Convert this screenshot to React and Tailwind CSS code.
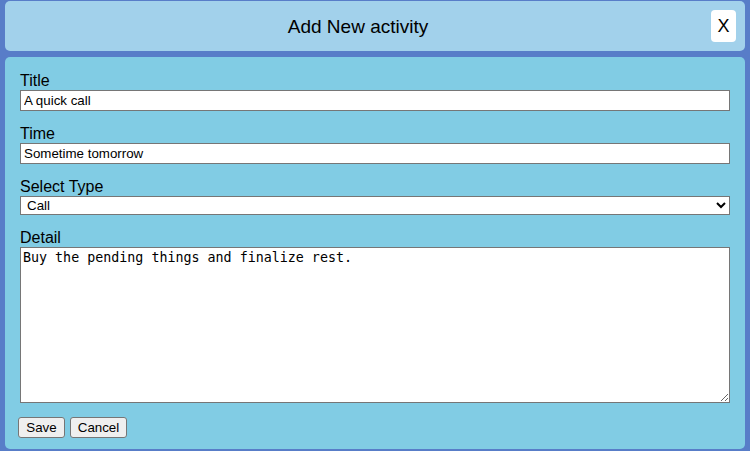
import { useState } from "react";

const App = () => {
  const [title, setTitle] = useState("A quick call");
  const [time, setTime] = useState("Sometime tomorrow");
  const [type, setType] = useState("Call");
  const [detail, setDetail] = useState("Buy the pending things and finalize rest.");

  return (
    <div className="min-h-screen bg-[#587dc8] px-[5px] pt-px flex flex-col gap-[6px] font-['Liberation_Sans',Arial,sans-serif] text-black">
      {/* Header */}
      <div className="h-[50px] bg-[#a2d1eb] rounded-[5px] flex items-center">
        <h2 className="flex-1 text-center text-[19px] leading-none">Add New activity</h2>
        <button className="w-[25px] h-[32px] mr-[9px] bg-white rounded-[4px] flex items-center justify-center text-[18px]">
          X
        </button>
      </div>

      {/* Form */}
      <div className="h-[392px] bg-[#81cce4] rounded-[5px] pt-[14px] px-[15px]">
        <div className="mb-[13px]">
          <label className="block text-[16px] leading-[19px]">Title</label>
          <input
            type="text"
            value={title}
            onChange={(e) => setTitle(e.target.value)}
            className="block w-full h-[21px] bg-white border border-[#767676] px-[3px] text-[13.33px] outline-none"
          />
        </div>

        <div className="mb-[13px]">
          <label className="block text-[16px] leading-[19px]">Time</label>
          <input
            type="text"
            value={time}
            onChange={(e) => setTime(e.target.value)}
            className="block w-full h-[21px] bg-white border border-[#767676] px-[3px] text-[13.33px] outline-none"
          />
        </div>

        <div className="mb-[13px]">
          <label className="block text-[16px] leading-[19px]">Select Type</label>
          <select
            value={type}
            onChange={(e) => setType(e.target.value)}
            className="block w-full h-[19px] bg-white border border-[#767676] pl-[2px] text-[13.33px] outline-none"
          >
            <option value="Call">Call</option>
            <option value="Meeting">Meeting</option>
            <option value="Task">Task</option>
          </select>
        </div>

        <div>
          <label className="block text-[16px] leading-[19px]">Detail</label>
          <textarea
            value={detail}
            onChange={(e) => setDetail(e.target.value)}
            className="block w-full h-[156px] bg-white border border-[#767676] px-[2px] py-[2px] text-[13.33px] leading-[16px] font-['DejaVu_Sans_Mono',monospace] outline-none"
          />
        </div>

        <div className="flex gap-[5px] mt-[14px] -ml-[2px]">
          <button className="h-[21px] w-[47px] bg-[#efefef] border border-[#767676] rounded-[3px] text-[13.33px]">
            Save
          </button>
          <button className="h-[21px] w-[57px] bg-[#efefef] border border-[#767676] rounded-[3px] text-[13.33px]">
            Cancel
          </button>
        </div>
      </div>
    </div>
  );
};

export default App;
